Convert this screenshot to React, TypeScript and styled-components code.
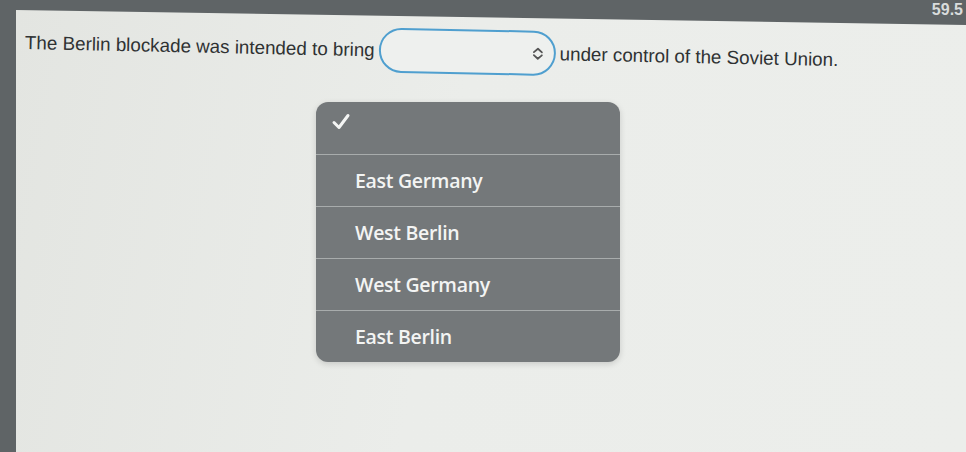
import styled, { createGlobalStyle } from "styled-components";

const GlobalStyle = createGlobalStyle`
  html, body {
    margin: 0;
    padding: 0;
    background: #5f6466;
  }
`;

const options = ["East Germany", "West Berlin", "West Germany", "East Berlin"];

export default function App() {
  return (
    <>
      <GlobalStyle />
      <Frame>
        <Clock>59.5</Clock>
        <Screen>
          <Question>
            <span>The Berlin blockade was intended to bring</span>
            <Select>
              <Chevron width="12" height="14" viewBox="0 0 12 14">
                <path d="M2 5.5 L6 2 L10 5.5 M2 8.5 L6 12 L10 8.5" />
              </Chevron>
            </Select>
            <span>under control of the Soviet Union.</span>
          </Question>
          <Menu>
            <MenuRow>
              <Check width="20" height="18" viewBox="0 0 20 18">
                <path d="M3 9.5 L8 14.5 L17 2.5" />
              </Check>
            </MenuRow>
            {options.map((o) => (
              <MenuRow key={o}>
                <Label>{o}</Label>
              </MenuRow>
            ))}
          </Menu>
        </Screen>
      </Frame>
    </>
  );
}

const Frame = styled.div`
  position: relative;
  width: 966px;
  height: 452px;
  box-sizing: border-box;
  padding: 10px 0 0 16px;
  background: #5f6466;
  overflow: hidden;
  display: flex;
`;

const Clock = styled.div`
  position: absolute;
  top: 2px;
  right: 3px;
  line-height: 1;
  font-family: "Liberation Sans", Arial, sans-serif;
  font-size: 16px;
  font-weight: 700;
  color: #d9dcdc;
`;

const Screen = styled.div`
  position: relative;
  flex: 1;
  background: linear-gradient(100deg, #e3e5e1 0%, #ebedea 45%, #eceeeb 100%);
  clip-path: polygon(0 0, 100% 15px, 100% 100%, 0 100%);
  padding: 10px 0 0 9px;
`;

const Question = styled.div`
  display: flex;
  align-items: center;
  gap: 4px;
  font-family: "Liberation Sans", Arial, sans-serif;
  font-size: 18.8px;
  color: #2f3233;
  transform: rotate(1.2deg);
  transform-origin: left center;
`;

const Select = styled.div`
  width: 177px;
  height: 45px;
  box-sizing: border-box;
  border: 2px solid #4f9fcf;
  border-radius: 23px;
  background: #eef0ee;
  display: flex;
  align-items: center;
  justify-content: flex-end;
  padding-right: 10px;
`;

const Chevron = styled.svg`
  fill: none;
  stroke: #555;
  stroke-width: 1.8;
  stroke-linecap: round;
  stroke-linejoin: round;
`;

const Menu = styled.div`
  position: absolute;
  left: 300px;
  top: 92px;
  width: 304px;
  border-radius: 12px;
  background: #74787a;
  overflow: hidden;
  box-shadow: 0 2px 6px rgba(0, 0, 0, 0.15);
`;

const MenuRow = styled.div`
  height: 52px;
  display: flex;
  align-items: center;
  padding-left: 39px;
  border-top: 1.5px solid #a8acac;
  box-sizing: border-box;

  &:first-child {
    border-top: none;
    padding-left: 15px;
    align-items: flex-start;
    padding-top: 11px;
  }
`;

const Check = styled.svg`
  fill: none;
  stroke: #f4f5f4;
  stroke-width: 3;
  stroke-linecap: round;
  stroke-linejoin: round;
`;

const Label = styled.span`
  font-family: "Open Sans", "Liberation Sans", Arial, sans-serif;
  font-size: 19.5px;
  font-weight: 600;
  color: #f3f4f3;
  letter-spacing: -0.3px;
`;
